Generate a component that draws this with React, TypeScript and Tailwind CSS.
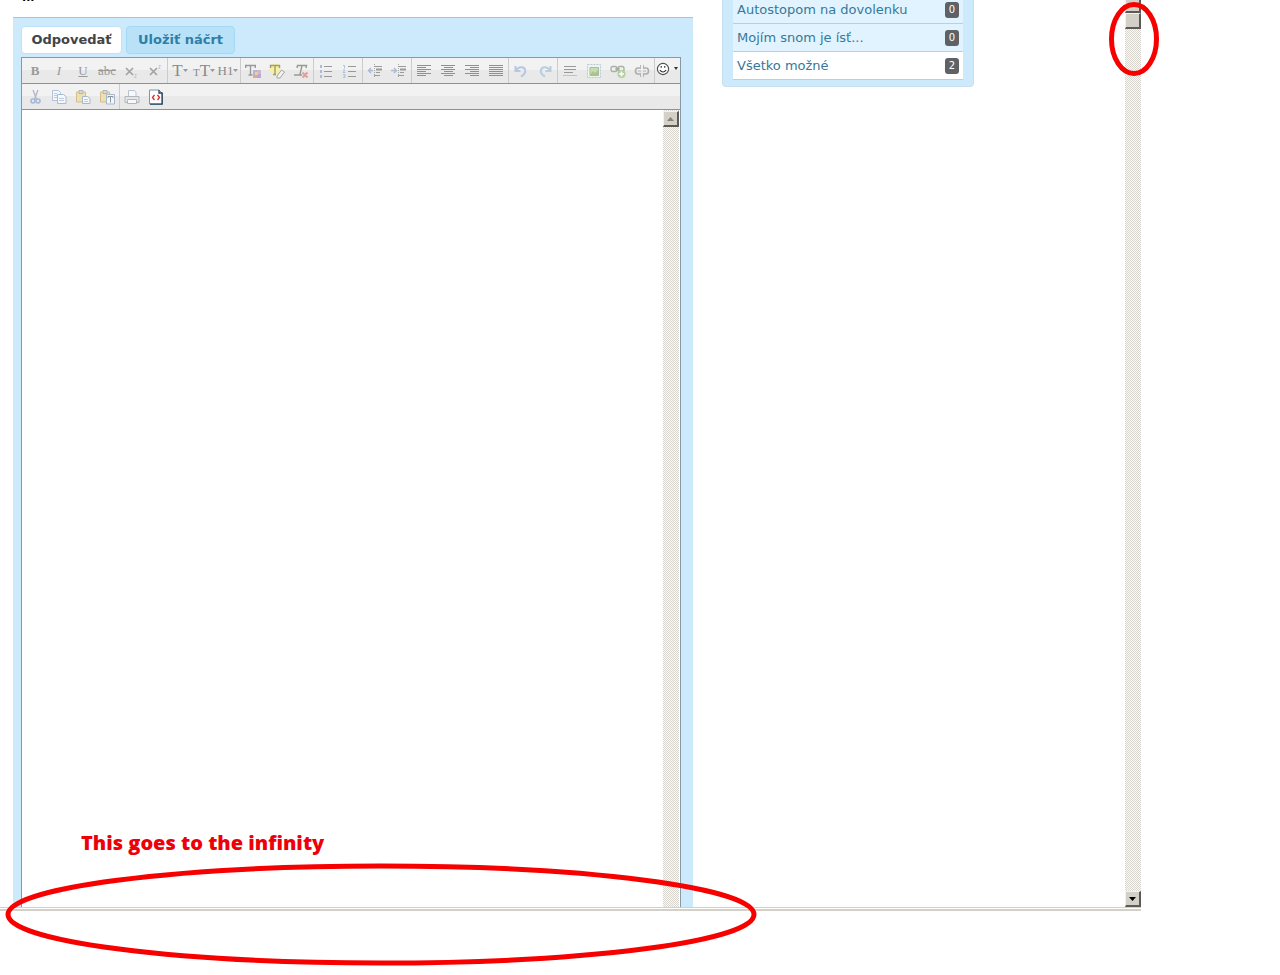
import type { ReactNode } from "react";

const DITHER =
  "bg-[#fbfaf9] bg-[conic-gradient(#d8d4ce_25%,#fbfaf9_0_50%,#d8d4ce_0_75%,#fbfaf9_0)] bg-[length:2px_2px]";

const BEVEL =
  "block h-4 w-4 shrink-0 border-t border-l border-r-2 border-b-2 border-t-[#f4f2ee] border-l-[#f4f2ee] border-r-[#5c5a57] border-b-[#5c5a57] bg-[#d4d0c8]";

type Tool = { label: string; icon: ReactNode };

function Icon({ children }: { children: ReactNode }) {
  return (
    <svg viewBox="0 0 16 16" className="h-4 w-4" fill="none" aria-hidden="true">
      {children}
    </svg>
  );
}

const GREY = "#a3a3a3";

function Lines({ rows }: { rows: [number, number][] }) {
  return (
    <Icon>
      {rows.map(([x, w], i) => (
        <rect key={i} x={x} y={2 + i * 2} width={w} height="1" fill="#8f8f8f" />
      ))}
    </Icon>
  );
}

function Arrow() {
  return (
    <svg viewBox="0 0 5 3" className="h-[3px] w-[5px]" aria-hidden="true">
      <path d="M0 0h5L2.500 3z" fill="#999" />
    </svg>
  );
}

function Indent({ flip }: { flip?: boolean }) {
  return (
    <Icon>
      <path d="M7.500 1v14" stroke="#a9a9a9" strokeDasharray="1 1" />
      <path d="M7 3.500h8M7 12.500h6M9 9.500h4" stroke="#9a9a9a" />
      <path d="M9 6.500h6" stroke="#9a9a9a" strokeWidth="2" />
      <path
        d={flip ? "M0 7.500h5M3 5l2.500 2.500L3 10" : "M6 7.500H1.500M4 5L1.500 7.500 4 10"}
        stroke="#a9bcd4"
        strokeWidth="1.400"
      />
    </Icon>
  );
}

function PasteShape() {
  return (
    <>
      <path d="M1.500 3h9v10h-9z" fill="#f0dfae" stroke="#d3bf8b" />
      <path d="M4 1.500h4v3H4z" fill="#d9d9d9" stroke="#b5b5b5" />
    </>
  );
}

const glyph = "font-['Liberation_Serif',serif] text-[13px] leading-none text-[#999]";
const bigGlyph = "flex items-baseline font-['Liberation_Serif',serif] text-[17px] leading-none text-[#8a8a8a]";

const rowOne: Tool[][] = [
  [
    { label: "Bold", icon: <b className={glyph}>B</b> },
    { label: "Italic", icon: <i className={glyph}>I</i> },
    { label: "Underline", icon: <u className={glyph}>U</u> },
    { label: "Strike", icon: <s className={glyph}>abc</s> },
    {
      label: "Subscript",
      icon: (
        <Icon>
          <path d="M3 5l7 7M10 5l-7 7" stroke={GREY} strokeWidth="1.700" />
          <path d="M11.500 11.500h2l-2 3h2" stroke="#b9c2cf" strokeWidth=".8" />
        </Icon>
      ),
    },
    {
      label: "Superscript",
      icon: (
        <Icon>
          <path d="M3 5l7 7M10 5l-7 7" stroke={GREY} strokeWidth="1.700" />
          <path d="M11.500 2.500h2l-2 3h2" stroke="#b9c2cf" strokeWidth=".8" />
        </Icon>
      ),
    },
  ],
  [
    {
      label: "Font",
      icon: (
        <>
          <span className={bigGlyph}>T</span>
          <Arrow />
        </>
      ),
    },
    {
      label: "Size",
      icon: (
        <>
          <span className={bigGlyph}>
            <span className="text-[11px]">T</span>T
          </span>
          <Arrow />
        </>
      ),
    },
    {
      label: "Heading",
      icon: (
        <>
          <span className="font-['Liberation_Serif',serif] text-[13px] leading-none text-[#8a8a8a]">H1</span>
          <Arrow />
        </>
      ),
    },
  ],
  [
    {
      label: "Text color",
      icon: (
        <Icon>
          <path d="M.7 5V2.500h9.600V5M5.500 2.500v9.500M3.500 12h4" stroke="#999" strokeWidth="1.400" />
          <path d="M8 7h4v4H8z" fill="#a9b9dd" />
          <path d="M12 7h4v4h-4z" fill="#d5b3c8" />
          <path d="M8 11h4v4H8z" fill="#e0a7a0" />
          <path d="M12 11h4v4h-4z" fill="#b6a9d8" />
          <path d="M10 9h3v3h-3z" fill="#e6cfa0" />
        </Icon>
      ),
    },
    {
      label: "Highlight",
      icon: (
        <Icon>
          <circle cx="6" cy="6" r="5.500" fill="#f6f0a4" />
          <path d="M1.500 5V2.500h9V5M6 2.500v8.500M4 11.500h3" stroke="#a29b78" strokeWidth="1.400" />
          <path d="M8 13l4.500-6 3 2-4.500 6H8z" fill="#f2f2f2" stroke="#a5a5a5" />
        </Icon>
      ),
    },
    {
      label: "Remove formatting",
      icon: (
        <Icon>
          <path d="M4 5l.5-2.500h9L13 5M9 2.500L7 11.500M1 12h8" stroke="#999" strokeWidth="1.400" />
          <path d="M9.500 9.500l5 5M14.500 9.500l-5 5" stroke="#e3a09c" strokeWidth="2.200" />
        </Icon>
      ),
    },
  ],
  [
    {
      label: "Bullets",
      icon: (
        <Icon>
          <path d="M6 3.500h8M6 8.500h8M6 13.500h8" stroke="#999" />
          <path d="M2 2h2v3H2zM2 7h2v3H2zM2 12h2v3H2z" fill="#a9bdd8" />
        </Icon>
      ),
    },
    {
      label: "Numbers",
      icon: (
        <Icon>
          <path d="M6 3.500h8M6 8.500h8M6 13.500h8" stroke="#999" />
          <path d="M1 2.500h1.500v3M1 7h2L1 9.500h2.500M1 11.500h2v3H1M1.500 13H3" stroke="#a9bdd8" strokeWidth=".9" />
        </Icon>
      ),
    },
  ],
  [
    { label: "Outdent", icon: <Indent /> },
    { label: "Indent", icon: <Indent flip /> },
  ],
  [
    { label: "Align left", icon: <Lines rows={[[1, 14], [1, 9], [1, 14], [1, 9], [1, 14], [1, 9]]} /> },
    { label: "Align center", icon: <Lines rows={[[1, 14], [4, 9], [1, 14], [4, 9], [1, 14], [4, 9]]} /> },
    { label: "Align right", icon: <Lines rows={[[1, 14], [6, 9], [1, 14], [6, 9], [1, 14], [6, 9]]} /> },
    { label: "Justify", icon: <Lines rows={[[1, 14], [1, 14], [1, 14], [1, 14], [1, 14], [1, 14]]} /> },
  ],
  [
    {
      label: "Undo",
      icon: (
        <Icon>
          <path d="M2.500 3v5h5M3 7.500c2-4 8-4.500 9-1 .8 3-1 5.500-4 7" stroke="#b4c8e3" strokeWidth="2" />
        </Icon>
      ),
    },
    {
      label: "Redo",
      icon: (
        <Icon>
          <path d="M13.500 3v5h-5M13 7.500C11 3.500 5.500 3 4 6.500c-.8 3 1 5.500 4 7" stroke="#b9cce3" strokeWidth="2" />
        </Icon>
      ),
    },
  ],
  [
    {
      label: "Horizontal rule",
      icon: (
        <Icon>
          <path d="M2 3.500h12M2 6.500h12M2 9.500h9" stroke="#999" />
          <path d="M1 12.500h14" stroke="#b5c5d3" />
        </Icon>
      ),
    },
    {
      label: "Image",
      icon: (
        <Icon>
          <path d="M1.500 1.500h13v13h-13z" fill="#edf4ee" stroke="#b9c9d8" strokeDasharray="2 1" />
          <path d="M4 4.500h8.500v8H4z" fill="#c8dcb2" stroke="#a9bda0" />
          <path d="M4 12l3-4 2 2 3-3v5z" fill="#a9c48d" />
        </Icon>
      ),
    },
    {
      label: "Link",
      icon: (
        <Icon>
          <rect x="1" y="3.500" width="6" height="5" rx="2" stroke="#a9b1a3" strokeWidth="1.400" />
          <rect x="8" y="3.500" width="6" height="5" rx="2" stroke="#a9b1a3" strokeWidth="1.400" />
          <path d="M5 6h5" stroke="#999" />
          <circle cx="11.500" cy="11" r="4" fill="#b2cfa0" />
          <path d="M9 11h5M11.500 8.500v5" stroke="#fff" strokeWidth="1.500" />
        </Icon>
      ),
    },
    {
      label: "Unlink",
      icon: (
        <Icon>
          <path
            d="M6 5H4Q1.500 5 1.500 8T4 11h2M10 5h2q2.500 0 2.500 3T12 11h-2"
            stroke="#adadad"
            strokeWidth="1.600"
          />
          <path d="M4 8h3M9 8h3M6.500 2v4M9.500 2v4M6.500 10v4M9.500 10v4" stroke="#b5b5b5" />
        </Icon>
      ),
    },
  ],
  [
    {
      label: "Emoticons",
      icon: (
        <span className="flex items-center gap-1 pb-1">
          <svg viewBox="0 0 12 12" className="h-3.5 w-3.5 shrink-0" fill="none" aria-hidden="true">
            <circle cx="6" cy="6" r="4.800" fill="#fff" stroke="#4f4f4f" />
            <path d="M4.500 3.500v1.500M7.500 3.500v1.500M3.300 7q2.700 3.200 5.400 0" stroke="#333" />
          </svg>
          <svg viewBox="0 0 4 3" className="h-[3px] w-1 shrink-0" aria-hidden="true">
            <path d="M0 0h4L2 3z" fill="#333" />
          </svg>
        </span>
      ),
    },
  ],
];

const rowTwo: Tool[][] = [
  [
    {
      label: "Cut",
      icon: (
        <Icon>
          <path d="M6 1l3.500 9M11 1L7.500 10" stroke="#b3bac4" strokeWidth="1.400" />
          <circle cx="6" cy="12" r="2" stroke="#a5b8d8" strokeWidth="1.600" />
          <circle cx="11" cy="12" r="2" stroke="#a5b8d8" strokeWidth="1.600" />
        </Icon>
      ),
    },
    {
      label: "Copy",
      icon: (
        <Icon>
          <path d="M1.500 1.500h6l2 2v8h-8z" fill="#f4f8fd" stroke="#b3c3da" />
          <path d="M6.500 5.500h6l2.500 2v7H6.500z" fill="#f4f8fd" stroke="#a9bbd6" />
          <path d="M3 4.500h3M3 6.500h3M3 8.500h3M8 9.500h5M8 11.500h5" stroke="#bccbe0" />
        </Icon>
      ),
    },
    {
      label: "Paste",
      icon: (
        <Icon>
          <PasteShape />
          <path d="M7.500 7.500h5l2.500 2v5H7.500z" fill="#f4f8fd" stroke="#a9b7cc" />
          <path d="M9 10.500h4M9 12.500h4" stroke="#bccbe0" />
        </Icon>
      ),
    },
    {
      label: "Paste text",
      icon: (
        <Icon>
          <PasteShape />
          <path d="M7.500 5.500h8v9.500h-8z" fill="#f4f6fa" stroke="#a9b7cc" />
          <path d="M9 9V7.500h5V9M11.500 7.500v6" stroke="#8a94a8" />
        </Icon>
      ),
    },
  ],
  [
    {
      label: "Print",
      icon: (
        <Icon>
          <path d="M4.500 7V1.500h6l1.500 2V7" fill="#f6f9fd" stroke="#b9c3cf" />
          <path d="M1 7.500h14v6H1z" fill="#e3e5e8" stroke="#b3b7bc" />
          <path d="M3.500 10.500h9v4h-9z" fill="#f8f8f8" stroke="#b3b7bc" />
        </Icon>
      ),
    },
    {
      label: "Source",
      icon: (
        <Icon>
          <path d="M1.500 1h9.500l3 3v11H1.500z" fill="#fff" stroke="#7f95a8" />
          <path d="M11 1v3h3M14.200 3.500v11.700H2" stroke="#23425f" strokeWidth="1.300" />
          <path d="M6.500 6L4.500 8.500l2 2.500M9.500 6l2 2.500-2 2.500" stroke="#d22b2b" strokeWidth="1.300" />
        </Icon>
      ),
    },
  ],
];

function Toolbar({ groups, label }: { groups: Tool[][]; label: string }) {
  return (
    <div
      role="toolbar"
      aria-label={label}
      className="flex h-[26px] shrink-0 overflow-hidden border-b border-[#8f9294] bg-linear-to-b from-[#f2f2f2] from-50% to-[#e9e9e9] to-50% pl-px"
    >
      {groups.map((group, i) => (
        <div key={i} className={i < groups.length - 1 ? "flex border-r border-[#ccc]" : "flex"}>
          {group.map((tool) => (
            <button
              key={tool.label}
              type="button"
              aria-label={tool.label}
              title={tool.label}
              className="flex w-6 items-center justify-center"
            >
              {tool.icon}
            </button>
          ))}
        </div>
      ))}
    </div>
  );
}

function ScrollButton({ down, muted }: { down?: boolean; muted?: boolean }) {
  return (
    <button type="button" aria-label={down ? "Scroll down" : "Scroll up"} className={BEVEL}>
      <svg viewBox="0 0 13 13" className="h-[13px] w-[13px]" aria-hidden="true">
        <path d={down ? "M3 5h7L6.500 9z" : "M3 9h7L6.500 5z"} fill={muted ? "#85817b" : "#000"} />
      </svg>
    </button>
  );
}

const categories = [
  { name: "Autostopom na dovolenku", count: 0, row: "bg-[#e1f3fe]" },
  { name: "Mojím snom je ísť...", count: 0, row: "bg-[#e1f3fe]" },
  { name: "Všetko možné", count: 2, row: "bg-white" },
];

export default function App() {
  return (
    <div className="relative h-screen overflow-hidden bg-white font-['DejaVu_Sans',Verdana,sans-serif]">
      <div className="flex h-[calc(100%-64px)] w-[calc(100%-139px)] flex-col">
        <div className="flex min-h-0 flex-1 justify-between">
          <div className="flex min-w-0 flex-1 items-start gap-[29px] pl-[13px]">
            <main className="flex h-full max-w-[680px] flex-1 flex-col">
              <p className="-mt-2 h-[25px] shrink-0 pl-[9px] text-[11px] leading-3 font-bold text-black">...</p>
              <form className="flex min-h-0 flex-1 flex-col border-t border-[#b3c3cc] bg-[#cdeafd] pt-2 pr-3 pl-2">
                <div className="flex shrink-0 gap-1 text-[13px] font-bold">
                  <button
                    type="button"
                    className="h-7 w-[101px] rounded-sm border border-[#bfe2f8] bg-white text-[#444]"
                  >
                    Odpovedať
                  </button>
                  <button
                    type="button"
                    className="h-7 w-[109px] rounded-sm border border-[#a5d8f3] bg-[#b9e2f9] text-[#2e7fa5]"
                  >
                    Uložiť náčrt
                  </button>
                </div>
                <div className="mt-[3px] flex min-h-0 flex-1 flex-col border-x border-t border-[#8799a5] bg-white">
                  <Toolbar groups={rowOne} label="Formatting" />
                  <Toolbar groups={rowTwo} label="Clipboard" />
                  <div className="flex min-h-0 flex-1 pr-px">
                    <textarea aria-label="Odpoveď" className="min-w-0 flex-1 resize-none bg-white p-2 text-sm outline-none" />
                    <div className={`w-4 pt-px ${DITHER}`}>
                      <ScrollButton muted />
                    </div>
                  </div>
                </div>
              </form>
            </main>
            <aside className="-mt-3.5 w-[252px] shrink-0 rounded-sm border border-[#c5dfee] bg-[#cdeafd] px-[10px] pt-[9px] pb-[6px]">
              <ul>
                {categories.map((c) => (
                  <li
                    key={c.name}
                    className={`flex h-7 items-center justify-between border-b border-[#a9d5ec] px-1 ${c.row}`}
                  >
                    <a href="#" className="text-[13px] whitespace-nowrap text-[#35799b]">
                      {c.name}
                    </a>
                    <span className="flex h-4 w-3.5 items-center justify-center rounded-[3px] bg-[#5f6265] text-[10px] text-white">
                      {c.count}
                    </span>
                  </li>
                ))}
              </ul>
            </aside>
          </div>
          <div className={`flex w-4 shrink-0 flex-col justify-between ${DITHER}`}>
            <div className="-mt-[3px]">
              <span className={BEVEL} />
              <span className={BEVEL} />
            </div>
            <ScrollButton down />
          </div>
        </div>
        <div className="h-1 shrink-0 border-t border-b-2 border-[#d4d0c8]" />
      </div>

      <p className="absolute top-[829px] left-[81px] font-['Open_Sans',sans-serif] text-[20px] leading-7 font-extrabold whitespace-nowrap text-[#ee0008]">
        This goes to the infinity
      </p>
      <svg
        viewBox="0 0 1280 975"
        className="pointer-events-none absolute top-0 left-0 h-[975px] w-[1280px]"
        fill="none"
        stroke="#f60000"
        strokeWidth="5"
        aria-hidden="true"
      >
        <ellipse cx="381" cy="914.500" rx="373" ry="48.500" />
        <ellipse cx="1134" cy="39" rx="22.500" ry="34.500" />
      </svg>
    </div>
  );
}
